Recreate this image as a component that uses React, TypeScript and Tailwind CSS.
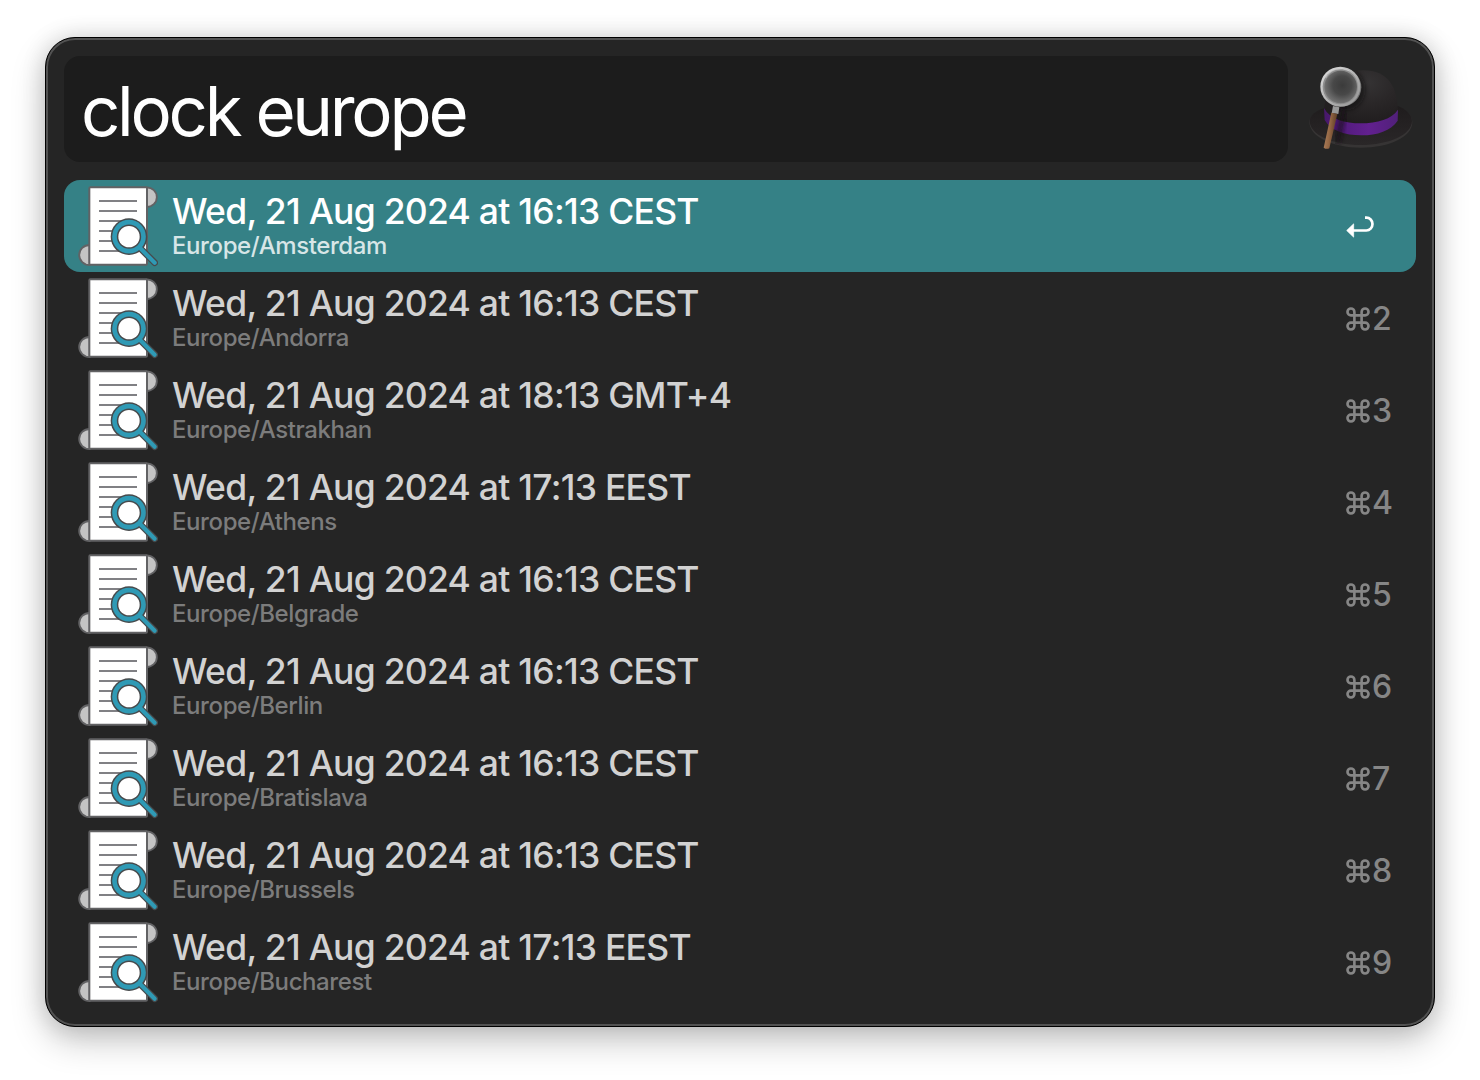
type Result = { time: string; zone: string };

const results: Result[] = [
  { time: "Wed, 21 Aug 2024 at 16:13 CEST", zone: "Europe/Amsterdam" },
  { time: "Wed, 21 Aug 2024 at 16:13 CEST", zone: "Europe/Andorra" },
  { time: "Wed, 21 Aug 2024 at 18:13 GMT+4", zone: "Europe/Astrakhan" },
  { time: "Wed, 21 Aug 2024 at 17:13 EEST", zone: "Europe/Athens" },
  { time: "Wed, 21 Aug 2024 at 16:13 CEST", zone: "Europe/Belgrade" },
  { time: "Wed, 21 Aug 2024 at 16:13 CEST", zone: "Europe/Berlin" },
  { time: "Wed, 21 Aug 2024 at 16:13 CEST", zone: "Europe/Bratislava" },
  { time: "Wed, 21 Aug 2024 at 16:13 CEST", zone: "Europe/Brussels" },
  { time: "Wed, 21 Aug 2024 at 17:13 EEST", zone: "Europe/Bucharest" },
];

function ScrollIcon() {
  return (
    <svg className="mt-[5px] h-[82px] w-20 shrink-0" viewBox="54 30 240 246" fill="none">
      <path d="M260 37a30.500 29.500 0 0 1 0 59z" fill="#c4c4c4" stroke="#626264" strokeWidth="5.500" />
      <path d="M89 210a31.500 30 0 0 0 0 60z" fill="#c4c4c4" stroke="#626264" strokeWidth="5.500" />
      <rect x="88" y="36.500" width="173" height="233" rx="3" fill="#fff" stroke="#626264" strokeWidth="6" />
      <path
        d="M117 78h114M117 108h114M117 138h114M117 168h114M117 198h114M117 228h114"
        stroke="#808084"
        strokeWidth="5.500"
      />
      <path d="M240 219L284 263" stroke="#474a4c" strokeWidth="20" strokeLinecap="round" />
      <circle cx="207" cy="185" r="55" fill="#474a4c" />
      <circle cx="207" cy="185" r="50.500" fill="#2f9ab5" />
      <path d="M238 217L284 263" stroke="#2f9ab5" strokeWidth="12.500" strokeLinecap="round" />
      <circle cx="207" cy="185" r="36.500" fill="#474a4c" />
      <circle cx="207" cy="185" r="32" fill="#fff" />
    </svg>
  );
}

function HatIcon() {
  return (
    <svg className="h-[90px] w-[106px]" viewBox="54 66 318 270" fill="none">
      <defs>
        <radialGradient id="crown" cx="0.58" cy="0.22" r="0.75">
          <stop offset="0" stopColor="#353334" />
          <stop offset="0.5" stopColor="#2a2728" />
          <stop offset="1" stopColor="#201d1e" />
        </radialGradient>
        <linearGradient id="brim" x1="0" y1="0" x2="0" y2="1">
          <stop offset="0" stopColor="#1f1c1d" />
          <stop offset="1" stopColor="#2a2728" />
        </linearGradient>
        <linearGradient id="band" x1="0" y1="0" x2="1" y2="0">
          <stop offset="0" stopColor="#47186a" />
          <stop offset="0.3" stopColor="#551c80" />
          <stop offset="0.6" stopColor="#62208f" />
          <stop offset="1" stopColor="#51207a" />
        </linearGradient>
        <radialGradient id="lens" cx="0.55" cy="0.45" r="0.58">
          <stop offset="0" stopColor="#3b3b3b" />
          <stop offset="0.5" stopColor="#484848" />
          <stop offset="1" stopColor="#777" />
        </radialGradient>
        <linearGradient id="rim" x1="0" y1="0" x2="1" y2="1">
          <stop offset="0" stopColor="#e2e2e2" />
          <stop offset="0.5" stopColor="#b4b4b4" />
          <stop offset="1" stopColor="#929292" />
        </linearGradient>
        <linearGradient id="wood" x1="0" y1="0" x2="1" y2="0.2">
          <stop offset="0" stopColor="#b18461" />
          <stop offset="0.5" stopColor="#956845" />
          <stop offset="1" stopColor="#5c3b25" />
        </linearGradient>
        <filter id="soft" x="-30%" y="-30%" width="160%" height="160%">
          <feGaussianBlur stdDeviation="6" />
        </filter>
        <clipPath id="hatClip">
          <path d="M104 206C108 130 145 92 220 90C290 90 320 136 324 200C346 208 367 226 367 246C367 290 300 321 212 321C124 321 58 288 58 246C58 230 75 214 104 206z" />
        </clipPath>
      </defs>
      <path d="M104 206C75 214 58 230 58 246C58 288 124 323 212 323C300 323 367 290 367 246C367 226 346 208 324 200z" fill="#363434" />
      <path d="M104 204C75 212 59 228 59 243C59 283 124 315 212 315C300 315 366 283 366 243C366 224 346 206 324 198z" fill="url(#brim)" />
      <path d="M102 225C102 135 142 91 220 91C295 91 324 140 324 225C290 268 135 268 102 225z" fill="url(#crown)" />
      <path d="M102 204C120 238 165 250 212 250C262 250 306 237 324 209L323 242C303 272 262 286 214 286C164 286 122 271 104 240z" fill="url(#band)" />
      <g clipPath="url(#hatClip)">
        <ellipse cx="168" cy="148" rx="58" ry="62" fill="#111" opacity="0.55" filter="url(#soft)" />
        <path d="M163 206L142 310" stroke="#160e18" strokeWidth="18" opacity="0.65" filter="url(#soft)" />
      </g>
      <circle cx="157" cy="142" r="57" fill="#747474" />
      <circle cx="151" cy="140" r="60" fill="url(#rim)" />
      <circle cx="151" cy="140" r="53" fill="#8e8e8e" />
      <circle cx="152" cy="141" r="49" fill="url(#lens)" />
      <path d="M107 114A52 52 0 0 1 176 92" stroke="#dedede" strokeWidth="2" opacity="0.7" />
      <path d="M129 198L148 202L145 222L125 219z" fill="#9a9a9a" />
      <path d="M124 218L142 222L118 325Q109 329 101 323z" fill="url(#wood)" />
    </svg>
  );
}

function ReturnIcon() {
  return (
    <svg className="h-[24px] w-[30px]" viewBox="78 74 90 72" fill="none">
      <path d="M135 82H139A18.500 19.250 0 0 1 139 120.500H98" stroke="#fff" strokeWidth="8" />
      <path d="M80 120.500L101 100.500V140.500z" fill="#fff" stroke="#fff" strokeWidth="2" strokeLinejoin="round" />
    </svg>
  );
}

function CommandIcon() {
  return (
    <svg className="h-6 w-6" viewBox="-0.500 -0.500 73 73" fill="none" stroke="#868686" strokeWidth="8">
      <path d="M25 25H47V47H25zM25 25H14.500A10.500 10.500 0 1 1 25 14.500zM47 25V14.500A10.500 10.500 0 1 1 57.500 25zM47 47H57.500A10.500 10.500 0 1 1 47 57.500zM25 47V57.500A10.500 10.500 0 1 1 14.500 47z" />
    </svg>
  );
}

function ResultRow({ result, index }: { result: Result; index: number }) {
  const selected = index === 0;
  return (
    <li className={`flex h-[92px] rounded-[16px] pl-[14px] ${selected ? "bg-[#358186]" : ""}`}>
      <ScrollIcon />
      <div className="flex-1 pt-[10px] pl-[14px] whitespace-nowrap">
        <div className={`h-[44px] text-[35.5px] leading-[44px] font-medium tracking-[-0.74px] ${selected ? "text-white" : "text-[#d2d2d2]"}`}>
          {result.time}
        </div>
        <div className={`-mt-[3px] h-[30px] text-[24px] leading-[30px] font-medium tracking-[-0.4px] ${selected ? "text-[#d7e6e7]" : "text-[#7c7c7c]"}`}>
          {result.zone}
        </div>
      </div>
      <div className="flex w-[70px] items-center pt-[2px]">
        {selected ? (
          <ReturnIcon />
        ) : (
          <>
            <CommandIcon />
            <span className="pl-[2px] text-[32px] leading-[40px] font-medium text-[#868686]">{index + 1}</span>
          </>
        )}
      </div>
    </li>
  );
}

export default function App() {
  return (
    <div className="h-[1080px] w-[1480px] overflow-hidden bg-white px-[45px] pt-[37px] font-['Inter',sans-serif]">
      <main className="h-[990px] rounded-[30px] border border-black bg-[#252525] px-[18px] pt-[18px] shadow-[inset_0_0_0_2px_#525252,0_0_24px_rgba(0,0,0,0.14),0_14px_34px_rgba(0,0,0,0.22)]">
        <header className="flex h-[106px]">
          <div className="flex w-[1224px] items-center rounded-[16px] bg-[#1c1c1c] pt-[3px] pl-[17px] text-[69px] leading-[84px] font-normal tracking-[-3.3px] text-white">
            clock europe
          </div>
          <div className="pt-[6px] pl-[20px]">
            <HatIcon />
          </div>
        </header>
        <ul className="mt-[18px]">
          {results.map((result, index) => (
            <ResultRow key={result.zone} result={result} index={index} />
          ))}
        </ul>
      </main>
    </div>
  );
}
